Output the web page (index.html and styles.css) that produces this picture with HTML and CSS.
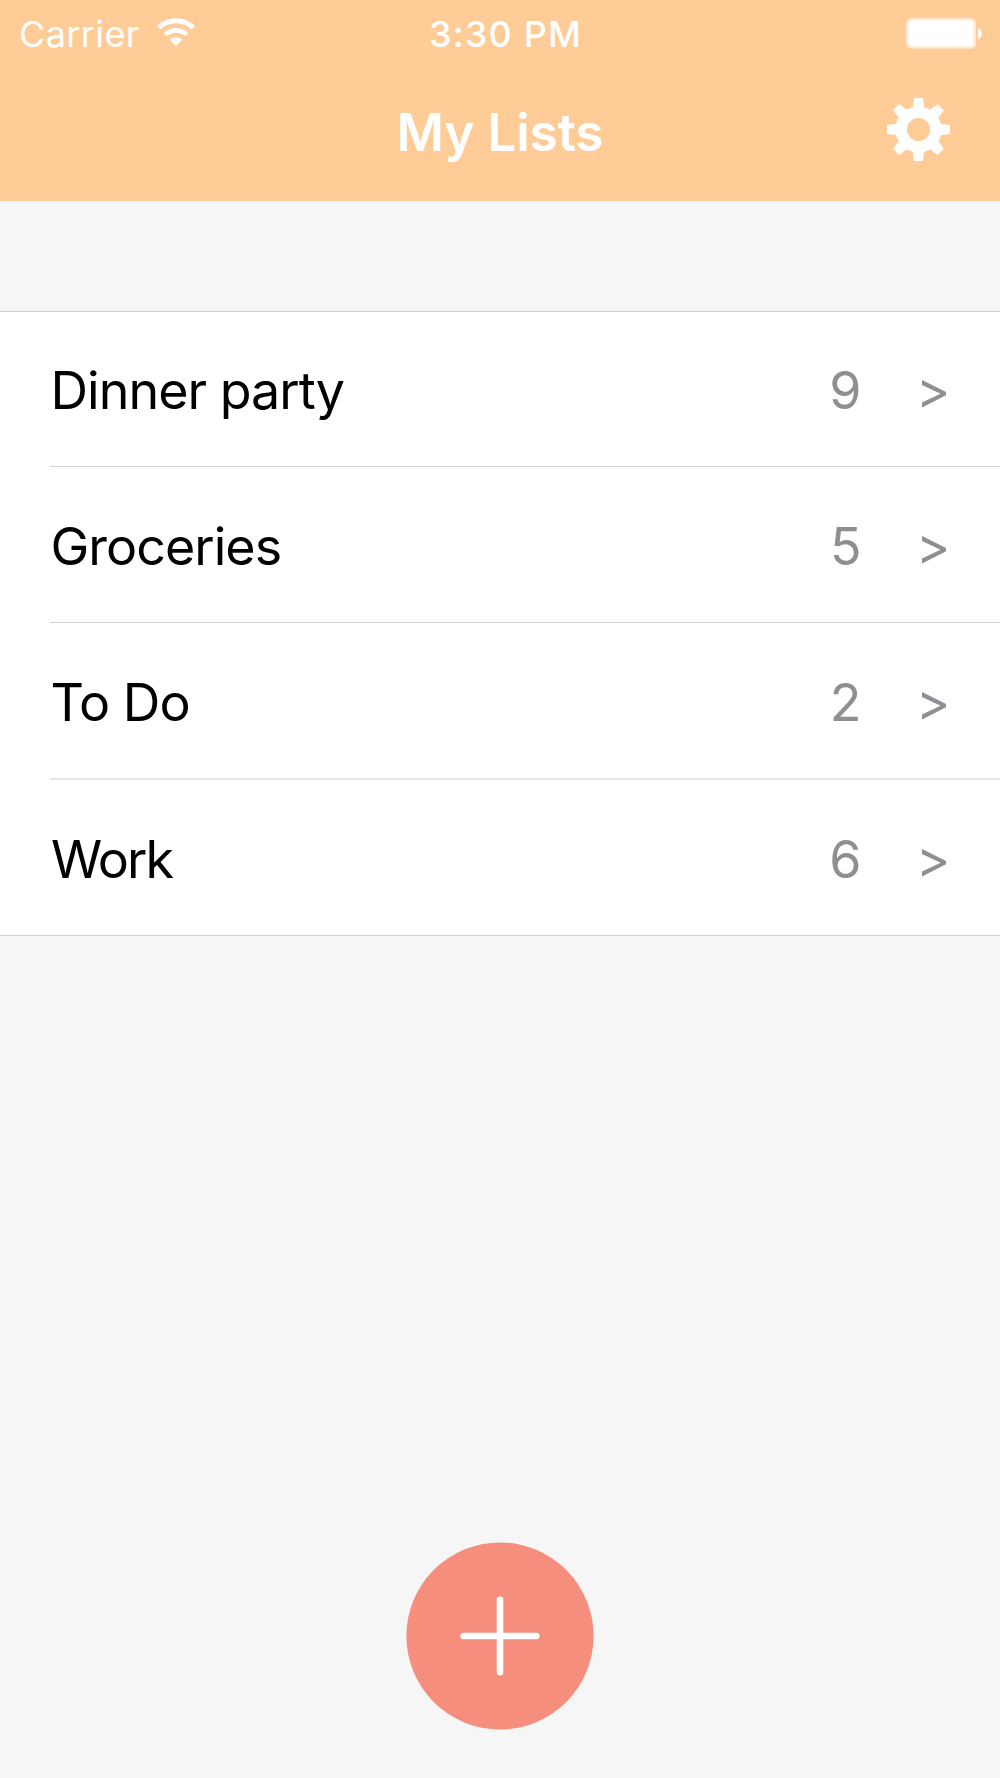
FILE: index.html
```html
<!DOCTYPE html>
<html lang="en">
<head>
<meta charset="utf-8">
<title>My Lists</title>
<link rel="stylesheet" href="styles.css">
</head>
<body>
<div class="screen">
  <header class="header">
    <div class="status-bar">
      <div class="network">
        <span class="carrier">Carrier</span>
        <svg class="wifi" viewBox="0 0 38 28" width="38" height="28" aria-hidden="true">
          <path d="M19 28 L12.8 21.7 A9 9 0 0 1 25.2 21.7 Z" fill="#fff"/>
          <path d="M8.4 16.6 A15.5 15.5 0 0 1 29.6 16.6" fill="none" stroke="#fff" stroke-width="4.6"/>
          <path d="M1.7 9.7 A25 25 0 0 1 36.3 9.7" fill="none" stroke="#fff" stroke-width="4.8"/>
        </svg>
      </div>
      <time class="clock">3:30 PM</time>
      <svg class="battery" viewBox="0 0 76 31" width="76" height="31" aria-hidden="true">
        <rect x="0.7" y="0.7" width="68.8" height="29.4" rx="4.5" fill="#ffe2c4" stroke="#fff" stroke-opacity=".6" stroke-width="1"/>
        <rect x="2.3" y="2.3" width="65.6" height="26.2" rx="3.5" fill="#fff"/>
        <path d="M72 10.2 C77 11.5 77 19.5 72 20.8 Z" fill="#fff"/>
      </svg>
    </div>
    <div class="nav-bar">
      <h1 class="title">My Lists</h1>
      <button class="settings" aria-label="Settings">
        <svg viewBox="-31.5 -31.5 63 63" width="63" height="63" aria-hidden="true">
          <defs><path id="tooth" d="M-5.8 -21 L-4.4 -31.5 H4.4 L5.8 -21 Z"/></defs>
          <g fill="#fff">
            <circle r="17.3" fill="none" stroke="#fff" stroke-width="11.6"/>
            <use href="#tooth"/>
            <use href="#tooth" transform="rotate(45)"/>
            <use href="#tooth" transform="rotate(90)"/>
            <use href="#tooth" transform="rotate(135)"/>
            <use href="#tooth" transform="rotate(180)"/>
            <use href="#tooth" transform="rotate(225)"/>
            <use href="#tooth" transform="rotate(270)"/>
            <use href="#tooth" transform="rotate(315)"/>
          </g>
        </svg>
      </button>
    </div>
  </header>
  <ul class="lists">
    <li class="row row-first"><span class="name">Dinner party</span><span class="count">9</span><span class="arrow">&gt;</span></li>
    <li class="row"><span class="name">Groceries</span><span class="count">5</span><span class="arrow">&gt;</span></li>
    <li class="row row-soft"><span class="name">To Do</span><span class="count">2</span><span class="arrow">&gt;</span></li>
    <li class="row row-last"><span class="name name-tight">Work</span><span class="count">6</span><span class="arrow">&gt;</span></li>
  </ul>
  <footer class="actions">
    <button class="add" aria-label="Add list">
      <svg viewBox="0 0 188 188" width="188" height="188" aria-hidden="true">
        <circle cx="94" cy="94" r="93.6" fill="#f58e7c"/>
        <path d="M94 57.7 V130.3 M57.7 94 H130.3" stroke="#fff" stroke-width="6.6" stroke-linecap="round"/>
      </svg>
    </button>
  </footer>
</div>
</body>
</html>
```
FILE: styles.css
```css
* {
  box-sizing: border-box;
}

body {
  margin: 0;
  font-family: Inter, "Liberation Sans", sans-serif;
  background: #f6f6f6;
}

button {
  display: block;
  padding: 0;
  border: 0;
  background: none;
}

svg {
  display: block;
}

.screen {
  display: flex;
  flex-direction: column;
  width: 1000px;
  height: 1778px;
  background: #f6f6f6;
}

.header {
  height: 202px;
  background: #ffcc98;
  border-bottom: 1px solid #faeee2;
  color: #fff;
}

.status-bar {
  display: grid;
  grid-template-columns: 1fr auto 1fr;
  height: 68px;
  padding: 0 18px 0 19px;
  font-size: 36px;
  line-height: 69px;
}

.network {
  display: flex;
  gap: 16.7px;
}

.carrier {
  font-weight: 400;
  letter-spacing: 0.4px;
}

.wifi,
.battery {
  margin-top: 18px;
}

.clock {
  padding-left: 10px;
  font-weight: 500;
  letter-spacing: 1.2px;
}

.battery {
  justify-self: end;
}

.nav-bar {
  display: grid;
  grid-template-columns: 1fr auto 1fr;
  height: 130px;
  padding-right: 50px;
  padding-left: 50px;
}

.title {
  grid-column: 2;
  margin: 0;
  font-size: 51.5px;
  font-weight: 600;
  line-height: 129px;
  letter-spacing: -0.15px;
}

.settings {
  justify-self: end;
  margin-top: 30px;
  height: 63px;
}

.lists {
  margin: 109px 0 0;
  padding: 0;
  border-top: 1px solid #d0d0d2;
  background: #fff;
  list-style: none;
}

.row {
  display: grid;
  grid-template-columns: 1fr 60px 89px;
  align-items: center;
  height: 156px;
  margin-left: 50px;
  padding: 4px 49.5px 0 0;
  border-bottom: 1px solid #d2d2d4;
  font-size: 52px;
}

.row-first {
  height: 155px;
  padding-top: 2px;
}

.row-soft {
  height: 157px;
  border-bottom: 2px solid #e6e6e7;
}

.row-last {
  margin-left: 0;
  padding-left: 50px;
  border-color: #d0d0d2;
}

.name {
  padding-left: 0.5px;
  letter-spacing: -0.98px;
}

.name-tight {
  padding-left: 1px;
  letter-spacing: -1.9px;
}

.count,
.arrow {
  color: #8e8e93;
  text-align: right;
}

.arrow {
  padding-bottom: 2px;
}

.actions {
  display: flex;
  justify-content: center;
  margin-top: auto;
  padding-bottom: 48px;
}
```
